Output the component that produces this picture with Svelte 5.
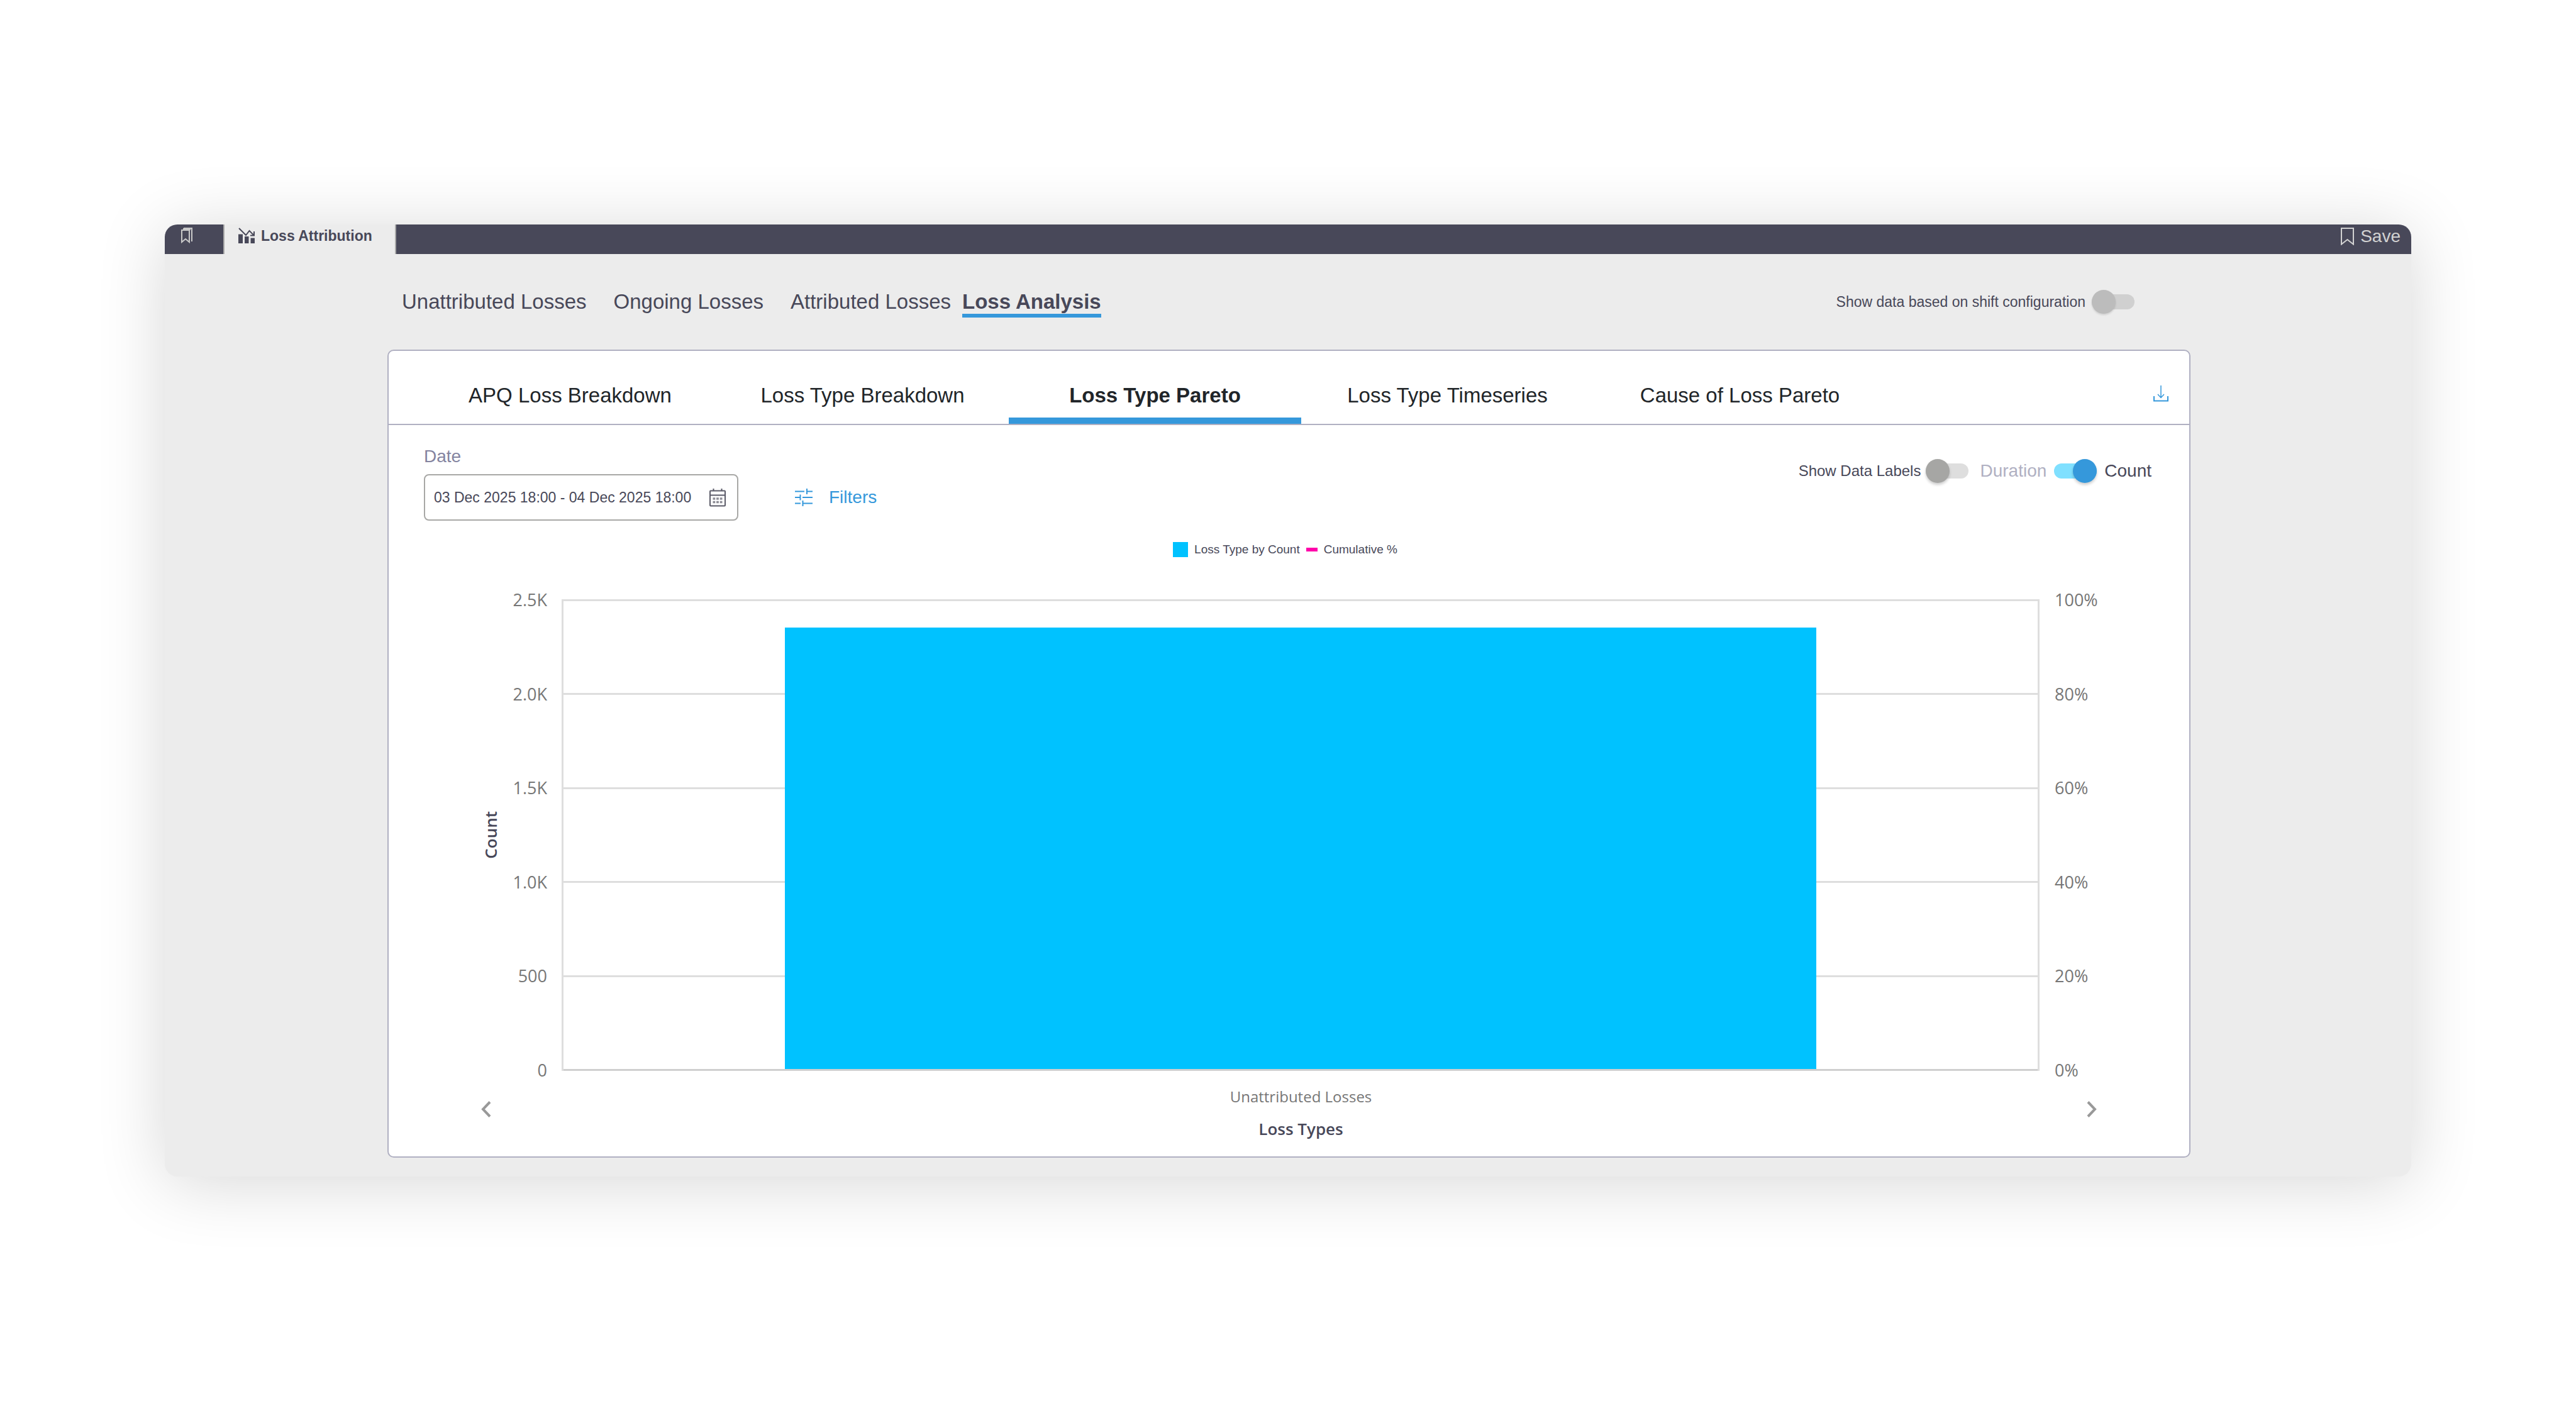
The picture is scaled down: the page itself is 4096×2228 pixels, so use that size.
<script lang="ts">
	const views = ['Unattributed Losses', 'Ongoing Losses', 'Attributed Losses', 'Loss Analysis'];
	const tabs = [
		'APQ Loss Breakdown',
		'Loss Type Breakdown',
		'Loss Type Pareto',
		'Loss Type Timeseries',
		'Cause of Loss Pareto'
	];

	const countTicks = ['2.5K', '2.0K', '1.5K', '1.0K', '500', '0'];
	const percentTicks = ['100%', '80%', '60%', '40%', '20%', '0%'];
	const maxCount = 2500;
	const losses = [{ name: 'Unattributed Losses', count: 2350 }];

	let view = $state('Loss Analysis');
	let tab = $state('Loss Type Pareto');
	let dateRange = $state('03 Dec 2025 18:00 - 04 Dec 2025 18:00');
	let useShifts = $state(false);
	let showLabels = $state(false);
	let byCount = $state(true);
</script>

<div class="stage">
	<div class="window">
		<header class="topbar">
			<button class="bookmarks" aria-label="Bookmarks">
				<svg width="18" height="26" viewBox="0 0 18 26" fill="none" stroke="#c9c9c9" stroke-width="2">
					<path d="M1 5h12v19l-6-5-6 5z" />
					<path d="M4 2h13v21" />
					<path d="M3 3.500h12" stroke-width="3" />
				</svg>
			</button>
			<a class="page-tab" href="#loss-attribution">
				<svg width="27" height="25" viewBox="0 0 27 25" fill="#484859">
					<path d="M0 10.500h7V25H0zM10 14h6.500V25H10zM19.500 16.500H26V25h-6.500z" />
					<path
						d="M1 1l11 11 5.500-7 7 7M25 6v6.500h-6"
						fill="none"
						stroke="#484859"
						stroke-width="2"
					/>
				</svg>
				Loss Attribution
			</a>
			<button class="save">
				<svg width="21" height="28" viewBox="0 0 21 28" fill="none" stroke="#d2d2d2" stroke-width="2">
					<path d="M1 1h19v25.500l-9.500-7.500L1 26.500z" />
				</svg>
				Save
			</button>
		</header>

		<div class="subbar">
			<nav class="views">
				{#each views as name}
					<a href="#view" class:active={view === name} onclick={() => (view = name)}>{name}</a>
				{/each}
			</nav>
			<label class="shift">
				Show data based on shift configuration
				<input class="toggle muted" type="checkbox" role="switch" bind:checked={useShifts} />
			</label>
		</div>

		<main class="card">
			<div class="tabs">
				{#each tabs as name}
					<button class="tab" class:active={tab === name} onclick={() => (tab = name)}>{name}</button>
				{/each}
				<button class="download" aria-label="Download">
					<svg width="24" height="26" viewBox="0 0 24 26" fill="none" stroke="#3598db">
						<path d="M1 17v7.500h22V17" stroke-width="2" />
						<path d="M12 0v19M7 14l5 5.500 5-5.500" stroke-width="1.500" />
					</svg>
				</button>
			</div>

			<div class="toolbar">
				<div class="field">
					<label for="date-range">Date</label>
					<div class="date-box">
						<input id="date-range" type="text" bind:value={dateRange} />
						<button aria-label="Open calendar">
							<svg width="26" height="29" viewBox="0 0 26 29" fill="none" stroke="#5b5b68" stroke-width="2">
								<rect x="1" y="3.500" width="24" height="24" rx="1" />
								<path d="M1 10.500h24M6.500 0v4M19.500 0v4" />
								<path
									d="M5.500 16h15M5.500 21.500h15"
									stroke="#8d8d96"
									stroke-width="3.500"
									stroke-dasharray="3.800 1.800"
								/>
							</svg>
						</button>
					</div>
				</div>
				<button class="filters">
					<svg width="28" height="28" viewBox="0 0 28 28" fill="none" stroke="#3598db" stroke-width="2">
						<path d="M0 4.500h15M19 4.500h9M19 0v9" />
						<path d="M0 14h8.500M12 14h16M8.500 9.500v9" />
						<path d="M0 23.500h9M12.500 23.500H28M12.500 19v9" />
					</svg>
					Filters
				</button>
				<div class="options">
					<label class="data-labels">
						Show Data Labels
						<input class="toggle" type="checkbox" role="switch" bind:checked={showLabels} />
					</label>
					<div class="unit">
						<span class="off">Duration</span>
						<input
							id="unit"
							class="toggle"
							type="checkbox"
							role="switch"
							bind:checked={byCount}
						/>
						<label for="unit">Count</label>
					</div>
				</div>
			</div>

			<div class="legend">
				<span class="swatch"></span>
				<span>Loss Type by Count</span>
				<span class="dash"></span>
				<span>Cumulative %</span>
			</div>

			<section class="chart">
				<div class="y-title"><span>Count</span></div>
				<div class="ticks left">
					{#each countTicks as tick}
						<span>{tick}</span>
					{/each}
				</div>
				<div class="plot">
					{#each countTicks as tick}
						<div class="line"></div>
					{/each}
					<div class="bars">
						{#each losses as loss}
							<div class="bar" style="height: {(loss.count / maxCount) * 100}%"></div>
						{/each}
					</div>
				</div>
				<div class="ticks right">
					{#each percentTicks as tick}
						<span>{tick}</span>
					{/each}
				</div>

				<button class="page prev" aria-label="Previous">
					<svg width="18" height="26" viewBox="0 0 18 26" fill="none" stroke="#999" stroke-width="4">
						<path d="M15 1.500L4 13l11 11.500" />
					</svg>
				</button>
				<div class="x-axis">
					{#each losses as loss}
						<span class="category">{loss.name}</span>
					{/each}
					<span class="x-title">Loss Types</span>
				</div>
				<button class="page next" aria-label="Next">
					<svg width="18" height="26" viewBox="0 0 18 26" fill="none" stroke="#999" stroke-width="4">
						<path d="M3 1.500L14 13 3 24.500" />
					</svg>
				</button>
			</section>
		</main>
	</div>
</div>

<style>
	:global(body) {
		background: #fff;
		color: #484859;
		font-family: 'Liberation Sans', Arial, sans-serif;
	}

	button {
		border: 0;
		padding: 0;
		background: none;
		color: inherit;
		font: inherit;
		cursor: pointer;
	}

	a {
		color: inherit;
		text-decoration: none;
	}

	svg {
		display: block;
		flex: none;
	}

	.stage {
		padding: 357px 262px;
	}

	.window {
		background: #ececec;
		border-radius: 20px;
		box-shadow: 0 10px 110px rgba(0, 0, 0, 0.16);
		padding-bottom: 30px;
	}

	/* top bar */
	.topbar {
		display: flex;
		height: 47px;
		background: #484859;
		border-radius: 20px 20px 0 0;
		overflow: hidden;
	}

	.bookmarks {
		width: 93px;
		padding: 4px 0 0 26px;
		display: flex;
	}

	.page-tab {
		display: flex;
		gap: 9px;
		width: 275px;
		box-sizing: border-box;
		padding: 5px 0 0 22px;
		border: solid #a9a9a9;
		border-width: 0 2px;
		background: #ececec;
		font-size: 23px;
		line-height: 26px;
		font-weight: 700;
		white-space: nowrap;
	}

	.save {
		display: flex;
		gap: 10px;
		margin-left: auto;
		padding: 5px 17px 0 0;
		color: #d2d2d2;
		font-size: 28px;
		line-height: 28px;
	}

	/* view links */
	.subbar {
		display: flex;
		align-items: center;
		justify-content: space-between;
		height: 152px;
		margin: 0 351px 0 354px;
		padding: 0 89px 0 23px;
	}

	.views {
		display: flex;
		gap: 18px;
		font-size: 33px;
		line-height: 38px;
	}

	.views a {
		border: solid transparent;
		border-width: 6px 0;
	}

	.views a:nth-child(-n + 2) {
		margin-right: 25px;
	}

	.views a.active {
		border-bottom-color: #3598db;
		font-weight: 700;
	}

	.shift {
		display: flex;
		align-items: center;
		gap: 10px;
		font-size: 23px;
	}

	.toggle {
		appearance: none;
		position: relative;
		flex: none;
		width: 68px;
		height: 24px;
		margin: 0;
		border-radius: 12px;
		background: #dedede;
		cursor: pointer;
	}

	.toggle::before {
		content: '';
		position: absolute;
		top: -7px;
		left: 0;
		width: 38px;
		height: 38px;
		border-radius: 50%;
		background: #a6a6a4;
		box-shadow: 0 3px 4px rgba(0, 0, 0, 0.2);
	}

	.toggle.muted {
		background: #d0d0d0;
	}

	.toggle.muted::before {
		background: #bcbcbc;
		box-shadow: 0 2px 3px rgba(0, 0, 0, 0.12);
	}

	.toggle:checked {
		background: #80e0ff;
	}

	.toggle:checked::before {
		left: 30px;
		background: #3598db;
	}

	/* card */
	.card {
		margin: 0 351px 0 354px;
		background: #fff;
		border: 2px solid #b0b0c2;
		border-radius: 10px;
	}

	.tabs {
		display: flex;
		height: 116px;
		padding: 0 33px 0 56px;
		border-bottom: 2px solid #b0b0c2;
		color: #212529;
	}

	.tab {
		width: 465px;
		padding-top: 35px;
		border-bottom: 10px solid transparent;
		font-size: 33px;
		white-space: nowrap;
	}

	.tab.active {
		border-color: #3598db;
		font-weight: 700;
	}

	.download {
		margin-left: auto;
		padding-top: 20px;
	}

	.toolbar {
		display: flex;
		align-items: flex-end;
		padding: 34px 60px 0 56px;
		font-size: 28px;
		line-height: 32px;
	}

	.field {
		display: grid;
		gap: 12px;
		color: #8484a0;
	}

	.date-box {
		display: flex;
		align-items: center;
		box-sizing: border-box;
		width: 500px;
		height: 74px;
		padding: 0 18px 0 14px;
		border: 2px solid #a8a8a6;
		border-radius: 8px;
	}

	.date-box input {
		flex: 1;
		min-width: 0;
		padding: 0;
		border: 0;
		outline: 0;
		background: none;
		color: #484859;
		font: 23px 'Liberation Sans', Arial, sans-serif;
	}

	.filters {
		display: flex;
		align-items: center;
		gap: 26px;
		height: 74px;
		margin-left: 90px;
		color: #3598db;
	}

	.options {
		display: flex;
		align-items: center;
		align-self: flex-start;
		gap: 18px;
		margin-left: auto;
		padding-top: 20px;
		height: 38px;
	}

	.data-labels {
		display: flex;
		align-items: center;
		gap: 8px;
		font-size: 24px;
	}

	.unit {
		display: flex;
		align-items: center;
		gap: 12px;
	}

	.off {
		color: #b0b0c2;
	}

	.legend {
		display: flex;
		align-items: center;
		justify-content: center;
		gap: 10px;
		margin-top: 34px;
		padding-right: 12px;
		font-size: 19px;
		line-height: 24px;
	}

	.swatch {
		width: 24px;
		height: 24px;
		background: #00c2ff;
	}

	.dash {
		width: 18px;
		height: 6px;
		background: #ff00aa;
	}

	/* chart */
	.chart {
		display: grid;
		grid-template-columns: 32px 74px minmax(0, 1fr) 68px;
		margin-top: 67px;
		padding: 0 146px 28px;
		font-family: 'Open Sans', 'Noto Sans', sans-serif;
		color: #767676;
	}

	.y-title {
		display: grid;
		place-items: center;
		color: #484859;
		font-size: 26px;
		line-height: 32px;
		font-weight: 600;
	}

	.y-title span {
		writing-mode: vertical-rl;
		transform: rotate(180deg);
	}

	.ticks {
		display: flex;
		flex-direction: column;
		justify-content: space-between;
		margin: -15px 0;
		font-size: 27px;
		line-height: 32px;
	}

	.left {
		text-align: right;
	}

	.plot {
		position: relative;
		box-sizing: border-box;
		display: flex;
		flex-direction: column;
		justify-content: space-between;
		height: 750px;
		margin: 0 24px 0 23px;
		border: solid #dedede;
		border-width: 0 3px;
	}

	.line {
		height: 3px;
		background: #dedede;
	}

	.line:nth-child(6) {
		background: #cfcfcf;
	}

	.bars {
		position: absolute;
		inset: 0 0 3px;
		display: flex;
		align-items: flex-end;
	}

	.bar {
		flex: 1;
		margin: 0 15%;
		background: #00c2ff;
	}

	.page {
		align-self: start;
		margin-top: 48px;
	}

	.next {
		grid-column: 4;
		justify-self: end;
	}

	.x-axis {
		grid-column: 3;
		display: flex;
		flex-direction: column;
		align-items: center;
		gap: 19px;
		padding-top: 25px;
		line-height: 32px;
	}

	.category {
		font-size: 24px;
	}

	.x-title {
		color: #484859;
		font-size: 26px;
		font-weight: 600;
	}
</style>
